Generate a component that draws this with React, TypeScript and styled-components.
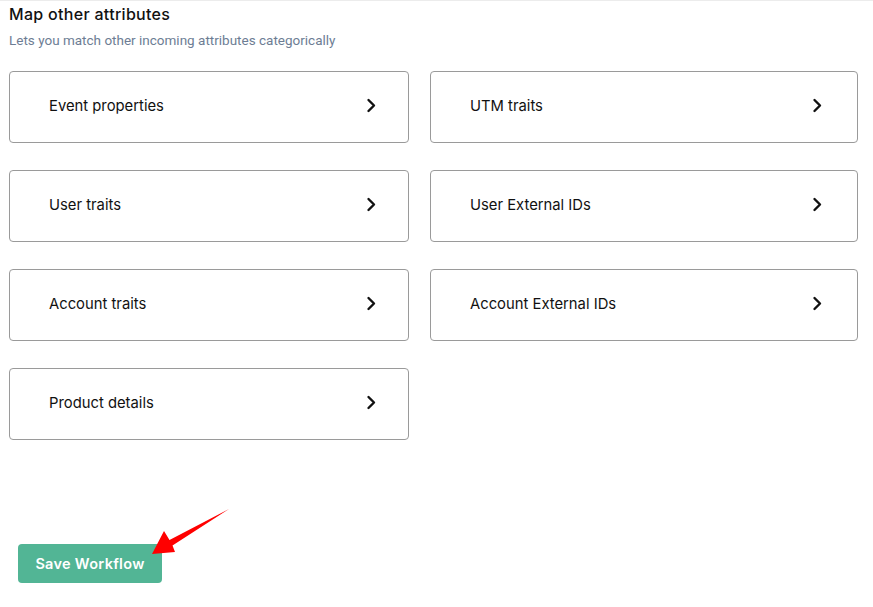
import styled, {createGlobalStyle} from 'styled-components';

const Global = createGlobalStyle`
  body {
    margin: 0;
    background: #ffffff;
    font-family: Inter, "Noto Sans", sans-serif;
  }`

const Page = styled.div`
  position: relative;
  width: 873px;
  height: 607px;
  box-sizing: border-box;
  padding: 3px 0 0 9px;
  border-top: 1px solid #ececec;`

const Title = styled.h2`
  margin: 0;
  font-size: 16px;
  font-weight: 500;
  line-height: 20px;
  color: #111111;
  letter-spacing: 0.3px;`

const Subtitle = styled.p`
  margin: 7px 0 0 0;
  font-family: Roboto, "Liberation Sans", sans-serif;
  font-size: 13.5px;
  line-height: 18px;
  color: #6d7d94;`

const Grid = styled.div`
  margin-top: 22px;
  display: grid;
  grid-template-columns: 400px 428px;
  grid-auto-rows: 72px;
  column-gap: 21px;
  row-gap: 27px;`

const Card = styled.div`
  box-sizing: border-box;
  border: 1px solid #9a9a9a;
  border-radius: 4px;
  display: flex;
  align-items: center;
  justify-content: space-between;
  padding: 0 ${(p: {right?: boolean}) => p.right ? '35px' : '32px'} 3px 39px;
  cursor: pointer;`

const Label = styled.span`
  font-size: 14.8px;
  color: #111111;`

const Footer = styled.div`
  margin-top: 104px;
  padding-left: 9px;`

const SaveButton = styled.button`
  width: 144px;
  height: 39px;
  border: none;
  border-radius: 4px;
  background: #52b595;
  color: #ffffff;
  font-family: Inter, "Noto Sans", sans-serif;
  font-size: 14.5px;
  font-weight: 600;
  letter-spacing: 0.3px;
  cursor: pointer;`

const Pointer = styled.svg`
  position: absolute;
  left: 0;
  top: 0;
  pointer-events: none;`

const Chevron = () => (
  <svg width="10" height="15" viewBox="0 0 10 15">
    <path d="M2.5 2 L8 7.5 L2.5 13" fill="none" stroke="#111" strokeWidth="2.4" strokeLinecap="round" strokeLinejoin="round"/>
  </svg>
)

const items = [
  {name: 'Event properties'},
  {name: 'UTM traits'},
  {name: 'User traits'},
  {name: 'User External IDs'},
  {name: 'Account traits'},
  {name: 'Account External IDs'},
  {name: 'Product details'},
]

const App = () => (
  <>
    <Global/>
    <Page>
      <Title>Map other attributes</Title>
      <Subtitle>Lets you match other incoming attributes categorically</Subtitle>
      <Grid>
        {items.map((it, i) => (
          <Card key={it.name} right={i % 2 === 1}>
            <Label>{it.name}</Label>
            <Chevron/>
          </Card>
        ))}
      </Grid>
      <Footer>
        <SaveButton>Save Workflow</SaveButton>
      </Footer>
      <Pointer width="873" height="607" viewBox="0 0 873 607">
        <polygon points="152,553 164,530 169.5,539 229,508 172.5,544.5 175,551" fill="#ff0000"/>
      </Pointer>
    </Page>
  </>
)

export default App
